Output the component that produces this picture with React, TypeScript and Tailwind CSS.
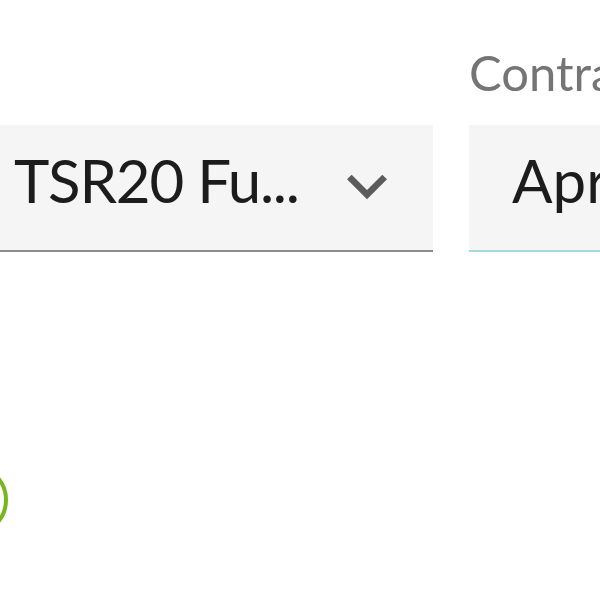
import React from "react";

export default function App() {
  return (
    <div
      className="relative w-[600px] h-[600px] overflow-hidden bg-white"
      style={{ fontFamily: "Lato, 'Open Sans', sans-serif" }}
    >
      <div className="flex gap-[36px] pt-[48px]">
        <div className="flex flex-col shrink-0 w-[433px]">
          <div className="h-[77px]" />
          <div className="relative h-[127px] bg-[#f5f5f5] border-b-2 border-[#8c8c8c] pl-[14px] pt-[25px]">
            <div className="text-[60px] leading-[60px] tracking-[-1.2px] text-[#1c1c1c] whitespace-nowrap">TSR20 Fu...</div>
            <svg
              className="absolute left-[327px] top-[21px]"
              width="80"
              height="80"
              viewBox="0 0 24 24"
            >
              <path d="M16.59 8.59L12 13.17 7.41 8.59 6 10l6 6 6-6z" fill="#5c5c5c" />
            </svg>
          </div>
        </div>
        <div className="flex flex-col shrink-0 w-[300px]">
          <div className="h-[77px] text-[49px] leading-[49px] text-[#757575] whitespace-nowrap">Contract</div>
          <div className="h-[127px] bg-[#f5f5f5] border-b-2 border-[#a6d9d9] pl-[43px] pt-[25px]">
            <div className="text-[60px] leading-[60px] text-[#1c1c1c] whitespace-nowrap">April 2024</div>
          </div>
        </div>
      </div>
      <svg className="absolute left-0 top-[460px]" width="20" height="80" viewBox="0 0 20 80">
        <circle cx="-28" cy="40" r="34" fill="none" stroke="#7ab51d" strokeWidth="4" />
      </svg>
    </div>
  );
}
